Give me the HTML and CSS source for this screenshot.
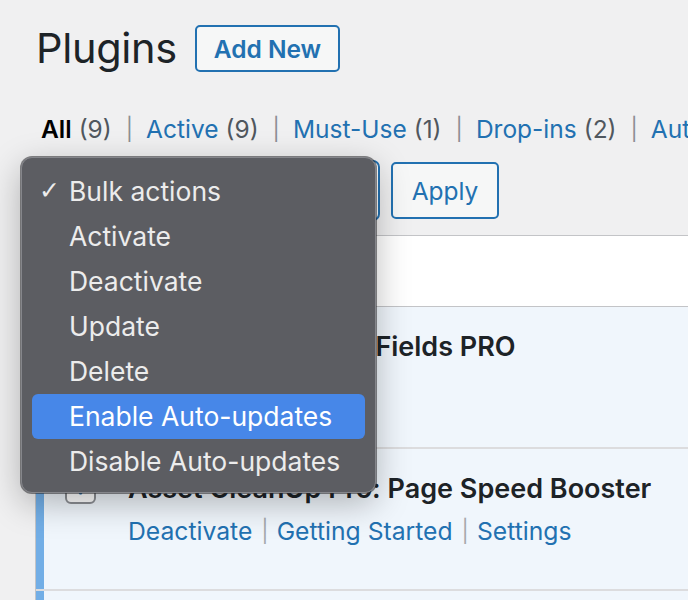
FILE: index.html
```html
<!DOCTYPE html>
<html lang="en">
<head>
<meta charset="utf-8">
<title>Plugins</title>
<link rel="stylesheet" href="styles.css">
</head>
<body>
<div class="wrap">
  <div class="page-head">
    <h1 class="page-title">Plugins</h1>
    <a class="btn btn-add" href="#">Add New</a>
  </div>

  <ul class="subsubsub">
    <li><span class="current">All</span> <span class="count">(9)</span><span class="sep">|</span></li>
    <li><a href="#">Active</a> <span class="count">(9)</span><span class="sep">|</span></li>
    <li><a href="#">Must-Use</a> <span class="count">(1)</span><span class="sep">|</span></li>
    <li><a href="#">Drop-ins</a> <span class="count">(2)</span><span class="sep">|</span></li>
    <li><a href="#">Auto-updates Disabled</a> <span class="count">(9)</span></li>
  </ul>

  <div class="tablenav">
    <div class="select">Bulk actions</div>
    <a class="btn btn-apply" href="#">Apply</a>
  </div>

  <div class="plugins">
    <div class="row head">
      <div class="cb"></div>
      <div class="col-name">Plugin</div>
    </div>
    <div class="row active">
      <div class="cb"><span class="checkbox"></span></div>
      <div class="col-name">
        <div class="plugin-title">Advanced Custom Fields PRO</div>
        <div class="row-actions"><a href="#">Deactivate</a></div>
      </div>
    </div>
    <div class="row active">
      <div class="cb">
        <span class="checkbox checked">
          <svg viewBox="0 0 20 20" width="26" height="26"><path d="M14.83 4.89l1.34.94-5.81 8.38H9.02L5.78 9.67l1.34-1.25 2.57 2.4z" fill="#2271b1"/></svg>
        </span>
      </div>
      <div class="col-name">
        <div class="plugin-title">Asset CleanUp Pro: Page Speed Booster</div>
        <div class="row-actions"><a href="#">Deactivate</a><span class="sep">|</span><a href="#">Getting Started</a><span class="sep">|</span><a href="#">Settings</a></div>
      </div>
    </div>
    <div class="row active"></div>
  </div>
</div>

<div class="menu">
  <div class="menu-item selected"><span class="check">✓</span>Bulk actions</div>
  <div class="menu-item">Activate</div>
  <div class="menu-item">Deactivate</div>
  <div class="menu-item">Update</div>
  <div class="menu-item">Delete</div>
  <div class="menu-item hover">Enable Auto-updates</div>
  <div class="menu-item">Disable Auto-updates</div>
</div>
</body>
</html>
```

FILE: styles.css
```css
html, body {
  margin: 0;
  padding: 0;
}
body {
  background: #f0f0f1;
  font-family: Inter, "Noto Sans", "Liberation Sans", sans-serif;
  color: #1d2327;
  width: 688px;
  height: 600px;
  overflow: hidden;
  position: relative;
}
a {
  color: #2271b1;
  text-decoration: none;
}
.wrap {
  padding-left: 36px;
}
.page-head {
  display: flex;
  align-items: center;
  gap: 18px;
  padding-top: 25px;
}
.page-title {
  margin: 0;
  font-size: 41.5px;
  font-weight: 400;
  line-height: 47px;
  letter-spacing: -0.3px;
  color: #1d2327;
}
.btn {
  display: flex;
  align-items: center;
  justify-content: center;
  box-sizing: border-box;
  border: 2px solid #2271b1;
  border-radius: 5px;
  background: #f6f7f7;
  color: #2271b1;
}
.btn-add {
  width: 145px;
  height: 47px;
  font-size: 24.5px;
  font-weight: 600;
}
.subsubsub {
  list-style: none;
  margin: 42px 0 0 5px;
  padding: 0;
  display: flex;
  white-space: nowrap;
  font-size: 24.5px;
  line-height: 30px;
  color: #50575e;
}
.subsubsub li {
  display: flex;
  align-items: center;
}
.subsubsub .current {
  font-weight: 600;
  color: #000;
}
.subsubsub .count {
  margin-left: 7px;
}
.subsubsub .sep {
  color: #8c8f94;
  margin: 0 13px 0 14px;
  font-size: 22px;
}
.tablenav {
  display: flex;
  align-items: center;
  margin-top: 16px;
  height: 61px;
}
.select {
  box-sizing: border-box;
  width: 344px;
  height: 61px;
  border: 2px solid #2271b1;
  border-radius: 7px;
  background: #fff;
  display: flex;
  align-items: center;
  padding-left: 16px;
  font-size: 24px;
  color: #2c3338;
}
.btn-apply {
  margin-left: 11px;
  width: 108px;
  height: 57px;
  font-size: 24.5px;
  font-weight: 400;
}
.plugins {
  margin-top: 14px;
  margin-left: -1px;
  border-top: 1px solid #c3c4c7;
  border-left: 1px solid #c3c4c7;
}
.row {
  display: flex;
  box-sizing: border-box;
}
.row.head {
  height: 71px;
  background: #fff;
  border-bottom: 1px solid #c3c4c7;
  align-items: center;
  font-size: 24px;
}
.row.active {
  height: 142px;
  background: #f0f6fc;
  box-shadow: inset 8px 0 0 #72aee6;
  border-bottom: 2px solid #dcdcde;
}
.cb {
  width: 92px;
  flex: none;
  display: flex;
  justify-content: flex-start;
  padding-left: 29px;
  box-sizing: border-box;
  padding-top: 24px;
}
.row.head .cb {
  padding-top: 0;
}
.col-name {
  padding-top: 24px;
  white-space: nowrap;
}
.row.head .col-name {
  padding-top: 0;
}
.checkbox {
  display: flex;
  align-items: center;
  justify-content: center;
  box-sizing: border-box;
  width: 31px;
  height: 31px;
  border: 2px solid #8c8f94;
  border-radius: 6px;
  background: #fff;
}
.plugin-title {
  font-size: 27px;
  font-weight: 600;
  line-height: 32px;
  color: #1d2327;
}
.row-actions {
  margin-top: 10px;
  font-size: 24.7px;
  line-height: 32px;
  display: flex;
  align-items: center;
}
.row-actions .sep {
  color: #a7aaad;
  margin: 0 8px 0 9px;
  font-size: 22px;
}

/* native select dropdown overlay */
.menu {
  position: absolute;
  left: 21px;
  top: 157px;
  width: 355px;
  height: 336px;
  box-sizing: border-box;
  padding: 11px 10px 0 10px;
  background: #5c5d62;
  border: 1px solid #85868b;
  border-radius: 11px;
  box-shadow: 0 0 0 1px rgba(40, 40, 44, 0.55), 0 10px 34px rgba(0, 0, 0, 0.28);
  font-family: Inter, "Noto Sans", "Liberation Sans", sans-serif;
  font-size: 26.5px;
  color: #ececec;
}
.menu-item {
  position: relative;
  height: 45px;
  line-height: 44px;
  padding-left: 37px;
  border-radius: 6px;
  white-space: nowrap;
}
.menu-item.hover {
  background: #4787e8;
  color: #fff;
}
.menu-item .check {
  position: absolute;
  left: 7px;
  top: 0;
  font-family: "DejaVu Sans", sans-serif;
  font-size: 25px;
  font-weight: 400;
}
```
